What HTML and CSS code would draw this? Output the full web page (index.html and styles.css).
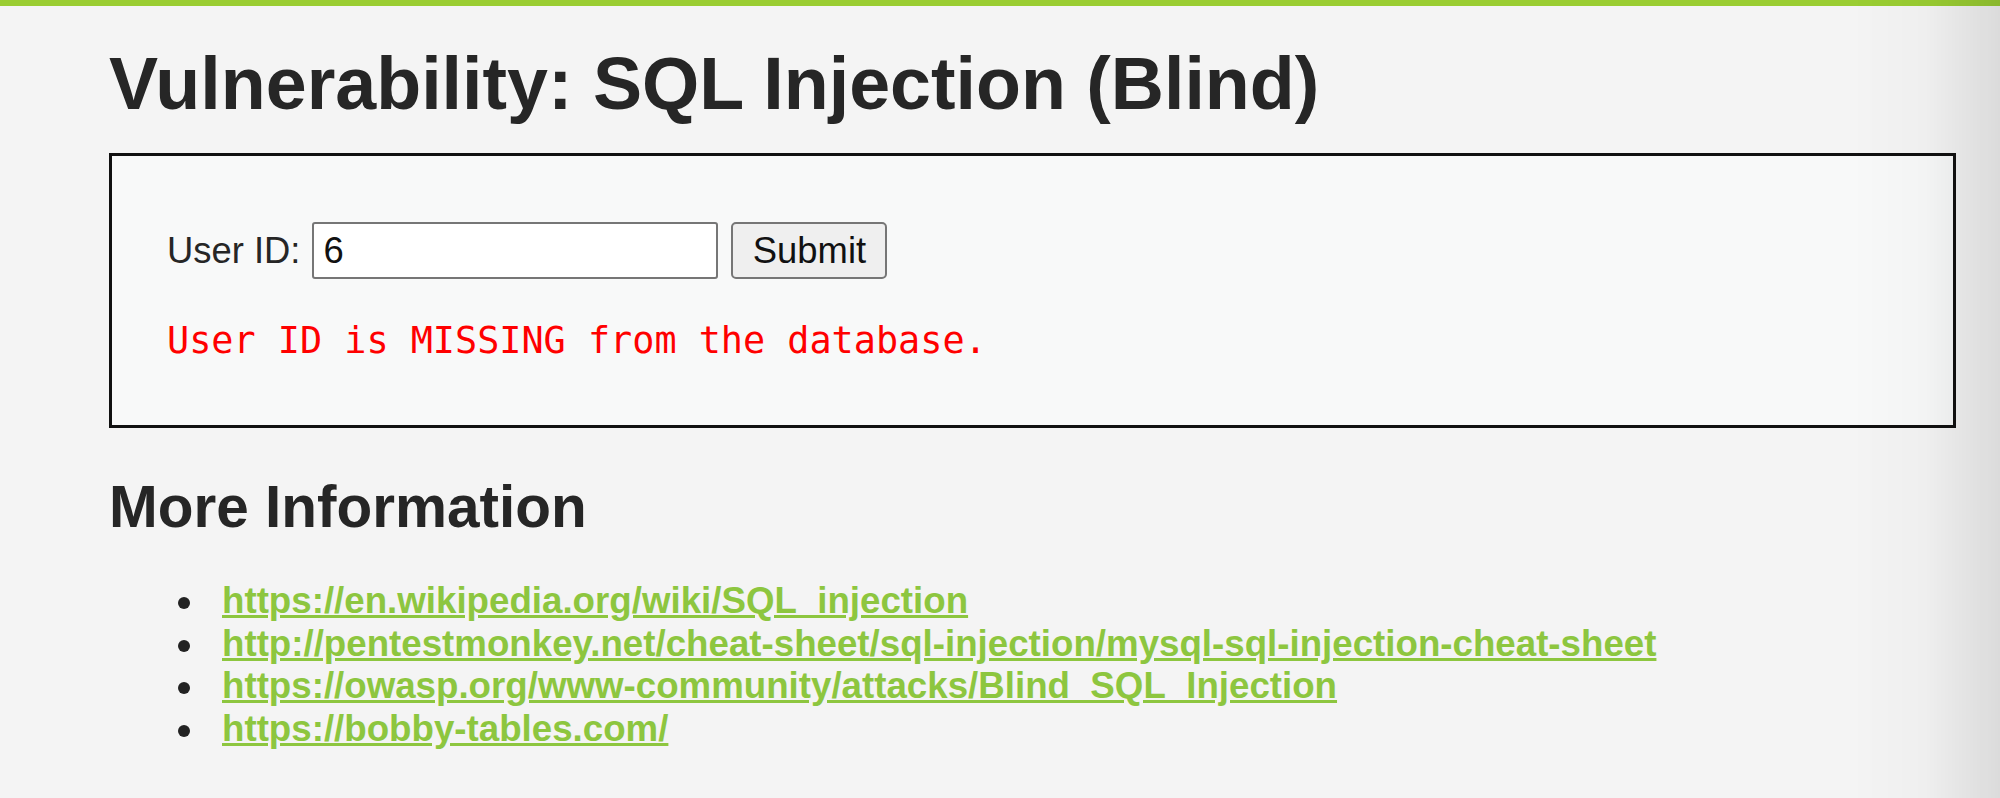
FILE: index.html
```html
<!DOCTYPE html>
<html lang="en">
<head>
<meta charset="utf-8">
<title>Vulnerability: SQL Injection (Blind)</title>
<link rel="stylesheet" href="styles.css">
</head>
<body>
<div class="topbar"></div>
<div class="main">
  <h1 class="title">Vulnerability: SQL Injection (Blind)</h1>
  <div class="code-area">
    <form class="row" action="#" method="get">
      <label class="label" for="uid">User ID:</label>
      <input class="field" id="uid" type="text" name="id" value="6">
      <button class="submit" type="button">Submit</button>
    </form>
    <pre class="message">User ID is MISSING from the database.</pre>
  </div>
  <h2 class="subtitle">More Information</h2>
  <ul class="links">
    <li><a href="#">https://en.wikipedia.org/wiki/SQL_injection</a></li>
    <li><a href="#">http://pentestmonkey.net/cheat-sheet/sql-injection/mysql-sql-injection-cheat-sheet</a></li>
    <li><a href="#">https://owasp.org/www-community/attacks/Blind_SQL_Injection</a></li>
    <li><a href="#">https://bobby-tables.com/</a></li>
  </ul>
</div>
<div class="edge-shade"></div>
</body>
</html>
```

FILE: styles.css
```css
html, body {
  margin: 0;
  padding: 0;
}
body {
  background: #f4f4f4;
  color: #262626;
  font-family: "Liberation Sans", Arial, sans-serif;
  font-size: 36.4px;
  height: 798px;
  overflow: hidden;
}
.topbar {
  height: 6px;
  background: #9acd32;
}
.main {
  padding: 0 44px 0 109px;
}
.title {
  margin: 35px 0 27px 0;
  font-size: 73.6px;
  font-weight: bold;
  line-height: normal;
}
.code-area {
  border: 3px solid #111;
  background: #f8f9f9;
  padding: 66px 56px 63px 55px;
}
.row {
  display: flex;
  align-items: center;
  margin: 0;
}
.label {
  font-size: 36.4px;
  color: #262626;
}
.field {
  box-sizing: border-box;
  width: 406px;
  height: 57px;
  margin-left: 12px;
  padding: 0 9px;
  border: 2px solid #767676;
  border-radius: 3px;
  background: #fff;
  font-family: "Liberation Sans", Arial, sans-serif;
  font-size: 36.4px;
  color: #111;
  outline: none;
}
.submit {
  box-sizing: border-box;
  width: 156px;
  height: 57px;
  margin-left: 13px;
  padding: 0;
  border: 2px solid #767676;
  border-radius: 5px;
  background: #efefef;
  font-family: "Liberation Sans", Arial, sans-serif;
  font-size: 36.4px;
  color: #111;
}
.message {
  margin: 40px 0 0;
  font-family: "DejaVu Sans Mono", monospace;
  font-size: 36.8px;
  color: #ff0000;
  line-height: normal;
}
.subtitle {
  margin: 45px 0 40px 0;
  font-size: 58.5px;
  font-weight: bold;
  line-height: normal;
}
.links {
  margin: 0;
  padding-left: 113px;
  font-size: 36.7px;
  line-height: 42.5px;
  list-style: none;
}
.links li::before {
  content: "";
  display: inline-block;
  width: 12px;
  height: 12px;
  margin-left: -44px;
  margin-right: 32px;
  border-radius: 50%;
  background: #222;
  vertical-align: middle;
}
.links a {
  color: #8dc63f;
  font-weight: bold;
  text-decoration: underline;
}
.edge-shade {
  position: fixed;
  top: 0;
  right: 0;
  bottom: 0;
  width: 150px;
  pointer-events: none;
  background: linear-gradient(to right, rgba(0,0,0,0) 0%, rgba(0,0,0,0.02) 50%, rgba(0,0,0,0.1) 100%);
}
```
